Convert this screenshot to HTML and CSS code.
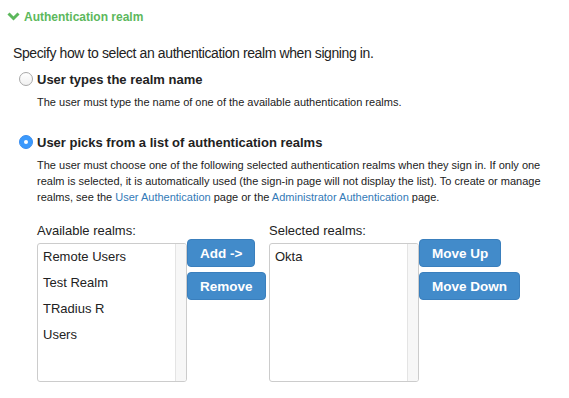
FILE: index.html
```html
<!DOCTYPE html>
<html>
<head>
	<title>Authentication realm</title>
	<link rel="stylesheet" href="styles.css">
</head>
<body>
	<div class="panel">
		<div class="ph">
			<svg class="chev" width="13" height="9" viewBox="0 0 13 9"><path d="M1.5 1.5 L6.5 6.5 L11.5 1.5" fill="none" stroke="#5cb85c" stroke-width="3"/></svg>
			<span>Authentication realm</span>
		</div>
		<p class="intro">Specify how to select an authentication realm when signing in.</p>

		<div class="opt">
			<span class="radio"></span>
			<span class="lbl">User types the realm name</span>
		</div>
		<p class="desc">The user must type the name of one of the available authentication realms.</p>

		<div class="opt opt2">
			<span class="radio on"></span>
			<span class="lbl">User picks from a list of authentication realms</span>
		</div>
		<p class="desc">The user must choose one of the following selected authentication realms when they sign in. If only one realm is selected, it is automatically used (the sign-in page will not display the list). To create or manage realms, see the <a href="#">User Authentication</a> page or the <a href="#">Administrator Authentication</a> page.</p>

		<div class="realms">
			<div class="col">
				<div class="cap">Available realms:</div>
				<div class="row">
					<div class="lb">
						<div class="items">
							<div>Remote Users</div>
							<div>Test Realm</div>
							<div>TRadius R</div>
							<div>Users</div>
						</div>
						<div class="sb"></div>
					</div>
					<div class="btns">
						<button>Add -&gt;</button>
						<button>Remove</button>
					</div>
				</div>
			</div>
			<div class="col">
				<div class="cap">Selected realms:</div>
				<div class="row">
					<div class="lb">
						<div class="items">
							<div>Okta</div>
						</div>
						<div class="sb"></div>
					</div>
					<div class="btns">
						<button>Move Up</button>
						<button>Move Down</button>
					</div>
				</div>
			</div>
		</div>
	</div>
</body>
</html>
```

FILE: styles.css
```css
body{
	margin:0;
	background:#fff;
	font-family:"Liberation Sans",Arial,sans-serif;
	color:#222;
}
.panel{
	width:569px;
	height:398px;
	overflow:hidden;
}
.ph{
	display:flex;
	align-items:center;
	padding:9px 0 0 7px;
	height:15px;
	color:#5cb85c;
	font-weight:bold;
	font-size:12px;
}
.chev{
	margin-right:4px;
}
.intro{
	margin:20px 0 0 13px;
	font-size:14px;
	letter-spacing:-0.4px;
	line-height:18px;
}
.opt{
	display:flex;
	align-items:center;
	margin:9px 0 0 19px;
	height:16px;
}
.opt2{
	margin-top:24px;
}
.radio{
	width:12px;
	height:12px;
	border:1px solid #a8a8a8;
	border-radius:50%;
	background:linear-gradient(#fff,#f0f0f0);
	margin-right:4px;
	position:relative;
}
.radio.on{
	border-color:#3a8ef0;
	background:#3b99fc;
}
.radio.on:after{
	content:"";
	position:absolute;
	left:4px;
	top:4px;
	width:4px;
	height:4px;
	border-radius:50%;
	background:#fff;
}
.lbl{
	font-weight:bold;
	font-size:13px;
}
.desc{
	margin:7px 0 0 37px;
	width:525px;
	font-size:11px;
	line-height:16px;
}
.desc a{
	color:#337ab7;
	text-decoration:none;
}
.realms{
	display:flex;
	margin:18px 0 0 37px;
}
.col{
	flex:none;
	width:232px;
}
.cap{
	font-size:13px;
	line-height:16px;
	margin-bottom:4px;
}
.row{
	display:flex;
	align-items:flex-start;
}
.lb{
	flex:none;
	display:flex;
	width:148px;
	height:137px;
	border:1px solid #ccc;
	border-radius:3px;
	overflow:hidden;
}
.items{
	flex:1;
	padding:0 0 0 5px;
	font-size:13px;
}
.items div{
	line-height:26px;
}
.sb{
	width:10px;
	border-left:1px solid #e4e4e4;
	background:#f7f7f7;
}
.btns{
	display:flex;
	flex-direction:column;
	align-items:flex-start;
	gap:5px;
	margin-top:-4px;
}
button{
	font-family:"Liberation Sans",Arial,sans-serif;
	font-weight:bold;
	font-size:13.5px;
	white-space:nowrap;
	color:#fff;
	background:#428bca;
	border:1px solid #3a7fbd;
	border-radius:4px;
	height:28px;
	padding:0 12px;
}
```
